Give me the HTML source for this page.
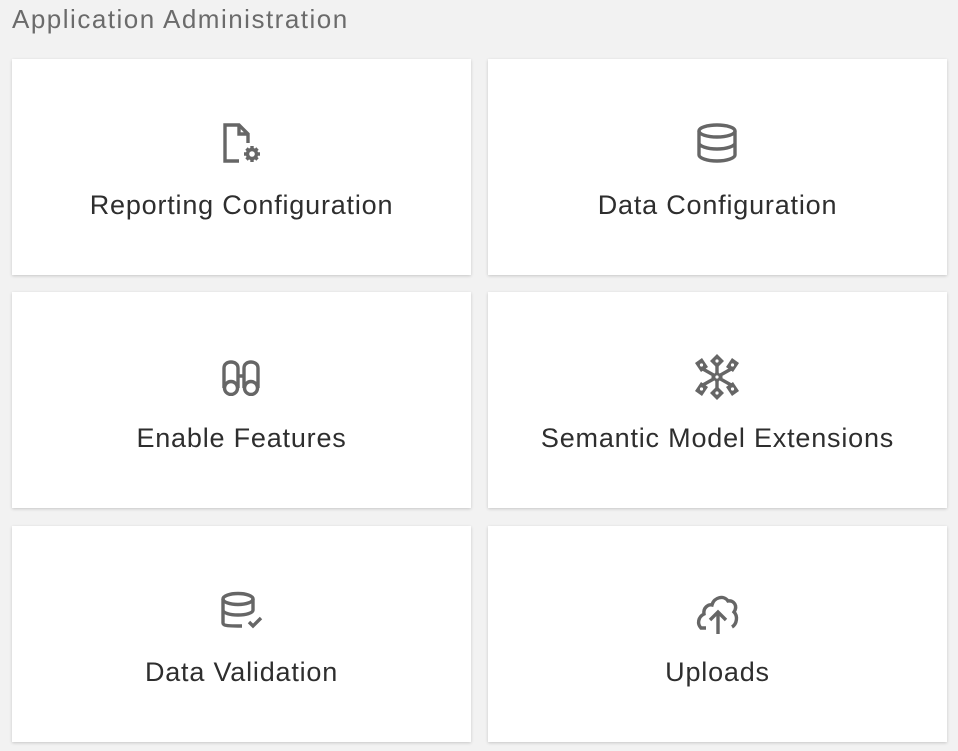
<!DOCTYPE html>
<html><head><style>
body{margin:0;background:#f2f2f2;font-family:"Liberation Sans",sans-serif;width:958px;height:751px;overflow:hidden;position:relative}
h1{position:absolute;left:12px;top:4px;margin:0;font-weight:normal;font-size:26px;letter-spacing:1.5px;color:#6b6b6b}
.c{position:absolute;width:459px;height:216px;background:#fff;box-shadow:0 1px 3px rgba(0,0,0,.18)}
.c svg{position:absolute;left:209px;top:64px}
.c span{position:absolute;left:0;right:0;top:131px;text-align:center;font-size:27px;letter-spacing:0.8px;color:#2e2e2e}
svg *{stroke:#666;fill:none;stroke-width:3.4}
</style></head><body>
<h1>Application Administration</h1>
<div class="c" style="left:12px;top:59px"><svg width="40" height="40" viewBox="0 0 40 40"><path d="M18 38H4V2H18L27 11V20M18 2V11H27"/><circle cx="31" cy="31" r="4.5"/><path d="M31 23V26M31 36V39M23 31H26M36 31H39M25.5 25.5L27.5 27.5M34.5 34.5L36.5 36.5M25.5 36.5L27.5 34.5M34.5 27.5L36.5 25.5" stroke-width="3"/></svg><span>Reporting Configuration</span></div>
<div class="c" style="left:488px;top:59px"><svg width="40" height="40" viewBox="0 0 40 40"><ellipse cx="20" cy="8" rx="18" ry="6"/><path d="M2 8V32C2 35 10 38 20 38S38 35 38 32V8M2 20C2 23 10 26 20 26S38 23 38 20"/></svg><span>Data Configuration</span></div>
<div class="c" style="left:12px;top:292px"><svg width="40" height="40" viewBox="0 0 40 40"><path d="M3 32V12C3 4 17 4 17 12V32M23 32V12C23 4 37 4 37 12V32M17 20H23"/><circle cx="10" cy="32" r="6.5"/><circle cx="30" cy="32" r="6.5"/></svg><span>Enable Features</span></div>
<div class="c" style="left:488px;top:292px"><svg width="46" height="46" viewBox="0 0 46 46" style="left:206px;top:62px"><path d="M23 6V40M8 14.5L38 31.5M8 31.5L38 14.5" stroke-width="3.6"/><path style="fill:#666;stroke:none" d="M23 0L30 7L23 14L16 7ZM23 32L30 39L23 46L16 39ZM1 9L8 4L14 13L7 18ZM45 9L38 4L32 13L39 18ZM1 37L8 42L14 33L7 28ZM45 37L38 42L32 33L39 28ZM23 17L29 23L23 29L17 23Z"/><g><circle cx="23" cy="7" r="1.6" style="fill:#fff;stroke:none"/><circle cx="23" cy="39" r="1.6" style="fill:#fff;stroke:none"/><circle cx="23" cy="23" r="1.6" style="fill:#fff;stroke:none"/><circle cx="7.5" cy="11" r="1.6" style="fill:#fff;stroke:none"/><circle cx="38.5" cy="11" r="1.6" style="fill:#fff;stroke:none"/><circle cx="7.5" cy="35" r="1.6" style="fill:#fff;stroke:none"/><circle cx="38.5" cy="35" r="1.6" style="fill:#fff;stroke:none"/></g></svg><span>Semantic Model Extensions</span></div>
<div class="c" style="left:12px;top:526px"><svg width="44" height="40" viewBox="0 0 44 40"><ellipse cx="17" cy="9" rx="15" ry="5.5"/><path d="M2 9V33C2 36 9 36 17 36H21M32 9V20M2 20C2 23 9 25 17 25S32 23 32 20"/><path d="M28 32L32 36L40 28"/></svg><span>Data Validation</span></div>
<div class="c" style="left:488px;top:526px"><svg width="44" height="42" viewBox="0 0 44 42" style="left:208px;top:66px"><path d="M10 36H5C1 32 2 25 8 22C7 16 12 12 16 13C18 5 28 3 32 9C38 8 42 14 38 20C42 24 41 32 36 35"/><path d="M22 42V20M14 28L22 20L30 28"/></svg><span>Uploads</span></div>
</body></html>
